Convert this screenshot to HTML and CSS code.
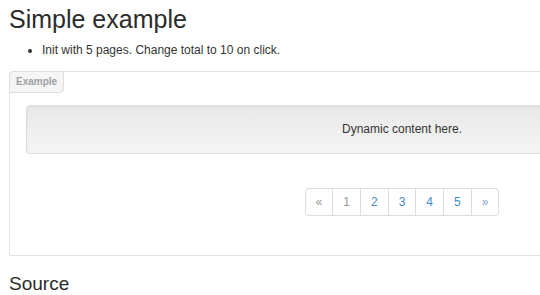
FILE: index.html
```
<!DOCTYPE html>
<html>
  <head>
    <title>Simple example</title>
    <link rel="stylesheet" href="styles.css">
  </head>
  <body>
    <h2 class="page-title">Simple example</h2>

    <ul class="notes">
      <li>Init with 5 pages. Change total to 10 on click.</li>
    </ul>

    <div class="example-box">
      <span class="example-label">Example</span>

      <div id="content" class="well">Dynamic content here.</div>

      <div class="pager-wrap">
        <ul class="pagination">
          <li class="disabled"><a href="#">&laquo;</a></li>
          <li class="disabled"><a href="#">1</a></li>
          <li><a href="#">2</a></li>
          <li><a href="#">3</a></li>
          <li><a href="#">4</a></li>
          <li><a href="#">5</a></li>
          <li class="next"><a href="#">&raquo;</a></li>
        </ul>
      </div>
    </div>

    <h3 class="section-title">Source</h3>
  </body>
</html>
```

FILE: styles.css
```
html,
body {
  overflow: hidden;
}

body {
  margin: 0;
  padding: 0 9px;
  background-color: #fff;
  font-family: "Liberation Sans", Arial, sans-serif;
  font-size: 12px;
  line-height: 17px;
  color: #333;
}

.page-title {
  margin: 6px 0 8px;
  font-size: 25px;
  font-weight: normal;
  line-height: 1.1;
  color: #2b2b2b;
}

.notes {
  margin: 0;
  padding-left: 33px;
}

.example-box {
  position: relative;
  width: 752px;
  margin-top: 12px;
  padding: 33px 16px 0;
  border: 1px solid #e3e3e3;
  border-radius: 4px 4px 0 0;
}

.example-label {
  position: absolute;
  top: -1px;
  left: -1px;
  padding: 3px 6px;
  font-size: 10px;
  font-weight: bold;
  line-height: 14px;
  color: #9da0a4;
  background-color: #f5f5f5;
  border: 1px solid #ddd;
  border-radius: 4px 0 4px 0;
}

.well {
  padding: 15px;
  text-align: center;
  background-color: #f0f0f0;
  background-image: linear-gradient(to bottom, #e8e8e8 0, #f5f5f5 100%);
  border: 1px solid #dcdcdc;
  border-radius: 4px;
  box-shadow: inset 0 1px 3px rgba(0, 0, 0, 0.05);
}

.pager-wrap {
  display: flex;
  justify-content: center;
  margin: 34px 0 39px;
}

.pagination {
  display: flex;
  margin: 0;
  padding: 0;
  list-style: none;
}

.pagination li a {
  display: block;
  margin-left: -1px;
  padding: 5px 10px;
  line-height: 16px;
  color: #428bca;
  text-decoration: none;
  background-color: #fff;
  border: 1px solid #ddd;
}

.pagination li:first-child a {
  margin-left: 0;
  border-radius: 4px 0 0 4px;
}

.pagination li:last-child a {
  border-radius: 0 4px 4px 0;
}

.pagination li.disabled a {
  color: #999;
}

.pagination li.next a {
  color: #7aa6cf;
}

.section-title {
  margin: 18px 0 0;
  font-size: 19px;
  font-weight: normal;
  line-height: 1.1;
  color: #2b2b2b;
}
```
